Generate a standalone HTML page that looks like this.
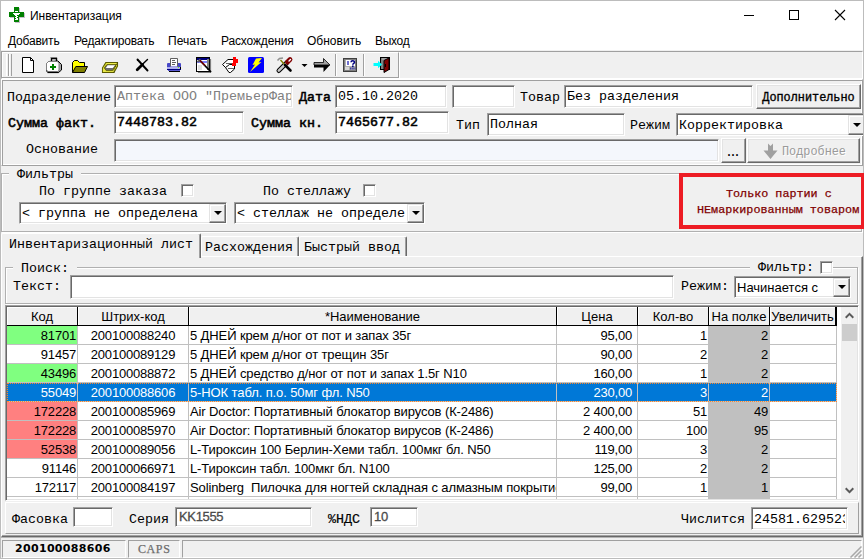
<!DOCTYPE html>
<html lang="ru">
<head>
<meta charset="utf-8">
<title>Инвентаризация</title>
<style>
*{box-sizing:border-box;margin:0;padding:0}
html,body{width:864px;height:559px;overflow:hidden;background:#f0f0f0}
body{position:relative;font-family:"Liberation Mono",monospace;font-size:13.333px;color:#000}
.abs{position:absolute}
#win{position:absolute;left:0;top:0;width:864px;height:559px;overflow:hidden}
#frame{position:absolute;left:0;top:0;width:864px;height:559px;border:1px solid #bcbcbc;z-index:50;pointer-events:none}
#title{position:absolute;left:1px;top:1px;width:862px;height:30px;background:#fff}
#title .t{position:absolute;left:29px;top:7px;font-family:"Liberation Sans",sans-serif;font-size:12px;line-height:16px;letter-spacing:-0.05px}
#menu{position:absolute;left:1px;top:31px;width:862px;height:19px;background:#fff;font-family:"Liberation Sans",sans-serif;font-size:12px;line-height:16px}
#menu span{position:absolute;top:2px;white-space:nowrap}
.hl{position:absolute;height:1px}
.vl{position:absolute;width:1px}
.lbl{position:absolute;white-space:nowrap;font-family:"Liberation Mono",monospace;font-size:13.333px;line-height:16px;height:16px;margin-top:1px}
.b{font-weight:normal;-webkit-text-stroke-width:0.55px}
.s{font-size:11.75px;-webkit-text-stroke-width:0.25px}
.inp{position:absolute;background:#fff;border:1px solid;border-color:#a0a0a0 #fff #fff #a0a0a0;box-shadow:inset 1px 1px 0 #696969, inset -1px -1px 0 #e3e3e3;white-space:nowrap;overflow:hidden;font-family:"Liberation Mono",monospace;font-size:13.333px;line-height:16px;padding:3px 0 0 2px}
.inp.t{font-family:"Liberation Sans",sans-serif;font-size:13px;color:#4a4a4a;padding-left:3px;letter-spacing:-0.35px;-webkit-text-stroke-width:0.3px}
.btn{position:absolute;background:#f0f0f0;border:1px solid;border-color:#fff #696969 #696969 #fff;box-shadow:inset -1px -1px 0 #a0a0a0, inset 1px 1px 0 #e3e3e3;white-space:nowrap;text-align:center;font-family:"Liberation Mono",monospace;font-size:11.85px;line-height:16px;font-weight:normal;-webkit-text-stroke-width:0.35px}
.dd{position:absolute;z-index:3;width:17px;background:#f0f0f0;border:1px solid;border-color:#e3e3e3 #696969 #696969 #e3e3e3;box-shadow:inset -1px -1px 0 #a0a0a0, inset 1px 1px 0 #fff}
.dd:after{content:"";display:block;margin:6px 0 0 4px;border:4px solid transparent;border-top:4px solid #000;border-bottom:0;width:0;height:0}
.cb{position:absolute;width:13px;height:13px;background:#fff;border:1px solid;border-color:#a0a0a0 #fff #fff #a0a0a0;box-shadow:inset 1px 1px 0 #696969, inset -1px -1px 0 #e3e3e3}
.grp{position:absolute;border:1px solid #b0b0b0;box-shadow:inset 1px 1px 0 #fff, 1px 1px 0 #fff}
.grp>.cap{position:absolute;top:-8px;background:#f0f0f0;padding:0 8px;white-space:nowrap;line-height:16px;height:16px;margin-top:1px;margin-left:-1px}
/* grid */
#grid{position:absolute;left:7px;top:307px;width:850px;height:192px;background:#fff;overflow:hidden;font-family:"Liberation Sans",sans-serif;font-size:13px}
#gridb{position:absolute;left:5px;top:305px;width:854px;height:196px;border:1px solid;border-color:#a0a0a0 #fff #fff #a0a0a0;box-shadow:inset 1px 1px 0 #696969, inset -1px -1px 0 #e3e3e3}
.hd{position:absolute;top:0;height:19px;background:#f0f0f0;border-right:1px solid #000;border-bottom:1px solid #000;box-shadow:inset 1px 1px 0 #fff;text-align:center;line-height:17px;white-space:nowrap;overflow:hidden;padding-top:1px}
.row{position:absolute;left:0;width:830px;height:19px}
.row .c{position:absolute;top:0;height:19px;border-right:1px solid #c0c0c0;border-bottom:1px solid #c0c0c0;line-height:18px;white-space:pre;overflow:hidden;padding:1px 1px 0 1px;letter-spacing:-0.11px}
.row .c.r,.row .c.m{letter-spacing:-0.2px}
.c.r{text-align:right}.c.m{text-align:center}.c.l{text-align:left}
.row .c.p{padding-right:5px}
.c.cg{background:#80ff80}.c.cr{background:#ff8080}.c.cs{background:#c0c0c0}
.row.sel{color:#fff}
.row.sel .c{background:#0078d7;border-right-color:#c0c0c0}
.sb{position:absolute;left:834px;top:0;width:17px;height:192px;background:#f0f0f0}
.thumb{position:absolute;left:1px;top:17px;width:15px;height:17px;background:#cdcdcd}
</style>
</head>
<body>
<div id="win">
<div id="frame"></div>
<div id="title"><span class="t">Инвентаризация</span>
<svg class="abs" style="left:7px;top:5px" width="18" height="18" viewBox="8 6 18 18" shape-rendering="crispEdges"><path d="M15 8h5v5h5v5h-5v5h-5v-5h-5v-5h5z" fill="#c8c0cc"/><path d="M14 7h5v5h5v5h-5v5h-5v-5H9v-5h5z" fill="#008000"/><rect x="15" y="11" width="3" height="1" fill="#fff"/><rect x="13" y="13" width="7" height="1" fill="#fff"/><rect x="14" y="14" width="5" height="1" fill="#fff"/><rect x="15" y="15" width="2" height="1" fill="#fff"/><rect x="16" y="16" width="2" height="1" fill="#fff"/><rect x="15" y="17" width="2" height="1" fill="#fff"/><rect x="16" y="18" width="2" height="1" fill="#fff"/><rect x="15" y="19" width="3" height="1" fill="#fff"/></svg>
<svg class="abs" style="left:742px;top:9px" width="12" height="12" viewBox="0 0 12 12"><path d="M1 5.5h10" stroke="#000" stroke-width="1"/></svg>
<svg class="abs" style="left:787px;top:8px" width="12" height="12" viewBox="0 0 12 12"><rect x="1.5" y="1.5" width="9" height="9" fill="none" stroke="#000" stroke-width="1"/></svg>
<svg class="abs" style="left:833px;top:8px" width="12" height="12" viewBox="0 0 12 12"><path d="M1 1l10 10M11 1L1 11" stroke="#000" stroke-width="1.1"/></svg>
</div>
<div id="menu">
<span style="left:7px;letter-spacing:-0.2px">Добавить</span><span style="left:73px;letter-spacing:-0.2px">Редактировать</span><span style="left:167px">Печать</span><span style="left:220px;letter-spacing:-0.15px">Расхождения</span><span style="left:306px">Обновить</span><span style="left:374px;letter-spacing:-0.3px">Выход</span>
</div>
<svg class="abs" style="left:0;top:51px" width="400" height="28" viewBox="0 51 400 28">
<!-- new doc -->
<path d="M22.500 57.500H30.500L33.500 60.500V72.500H22.500Z" fill="#fff" stroke="#000" stroke-width="1"/>
<path d="M30.500 57.500V60.500H33.500" fill="none" stroke="#000" stroke-width="1"/>
<!-- medkit -->
<path d="M51.500 61V58.500H56.500V61" fill="none" stroke="#000" stroke-width="1.400"/>
<path d="M50.500 57.500H57" fill="none" stroke="#808080" stroke-width="1"/>
<path d="M58 61L61.500 64.500V70L58.500 72.500H48L46.500 71V63.500L48.500 61.500Z" fill="#a8a8a8" stroke="#000" stroke-width="1"/>
<path d="M48.500 61.500H57.500L59 63.500V70.500L57.500 71.500H48L46.500 70V63.500Z" fill="#fff" stroke="#808080" stroke-width="1"/>
<path d="M47.500 72.500H58.500" stroke="#000" stroke-width="1.200"/>
<path d="M52 64h2v2h2v2h-2v2h-2v-2h-2v-2h2z" fill="#008000" shape-rendering="crispEdges"/>
<!-- folder -->
<path d="M72.500 72.500V62.500L74.500 60.500H77.500L79.500 62.500H84.500V67" fill="#ffff00" stroke="#000" stroke-width="1"/>
<path d="M73 72V63L75 61H77.300L79.300 63H84V67H73Z" fill="#ffff00"/>
<path d="M75.800 66.500H87.500L84.500 72.500H72.500Z" fill="#808000" stroke="#000" stroke-width="1"/>
<!-- tray -->
<path d="M105.800 62.500H117.500V66L114 72.500H102.500V67.800Z" fill="#d4d430" stroke="#5c5c00" stroke-width="1.100"/>
<path d="M106.500 63.600H116.600" stroke="#f0f050" stroke-width="1"/>
<path d="M107 64.600H116L112.600 70.600H106.200L104.300 68Z" fill="#6c6c6c" stroke="#5c5c00" stroke-width="0.800"/>
<path d="M107.700 65.200H115.200L112.700 68.100H105.800Z" fill="#fff"/>
<path d="M102.900 68.600L104 68.400L106 71.200H112.700L114 69.200V72.100H102.900Z" fill="#e8e84a"/>
<path d="M114 69.500V72.500M117.500 62.500L114 69" stroke="#3a3a00" stroke-width="1" stroke-dasharray="1 1"/>
<!-- X -->
<path d="M137.500 59.500L147.500 70.500" stroke="#000" stroke-width="1.900" stroke-linecap="round"/>
<path d="M147.500 59.500L142 64.800" stroke="#000" stroke-width="1.400" stroke-linecap="round"/>
<path d="M142.500 64.500L137.200 69.800" stroke="#000" stroke-width="2.800" stroke-linecap="round"/>
<!-- printer -->
<rect x="167" y="63" width="14" height="6" rx="1" fill="#4848c8"/>
<rect x="167" y="67" width="14" height="2" fill="#b0b0ee" shape-rendering="crispEdges"/>
<rect x="167" y="69" width="14" height="1" fill="#000080" shape-rendering="crispEdges"/>
<rect x="168" y="70" width="12" height="1" fill="#5858d0" shape-rendering="crispEdges"/>
<rect x="169" y="71" width="11" height="1" fill="#000" shape-rendering="crispEdges"/>
<rect x="180" y="67" width="1" height="2" fill="#000" shape-rendering="crispEdges"/>
<rect x="178" y="67" width="1" height="1" fill="#80ff00" shape-rendering="crispEdges"/>
<path d="M170.500 66.500V58.500H177.500V66.500" fill="#fff" stroke="#606060" stroke-width="1"/>
<path d="M172 60.500H175M172 62.500H176M172 64.500H175" stroke="#606060" stroke-width="1"/>
<!-- form with hammer -->
<rect x="196.500" y="57.500" width="13" height="14" fill="#fff" stroke="#000" stroke-width="1"/>
<path d="M210.500 59V72.500H198" fill="none" stroke="#808080" stroke-width="1.200"/>
<rect x="197" y="58" width="12" height="2" fill="#000080" shape-rendering="crispEdges"/>
<rect x="197" y="60" width="12" height="1" fill="#fff" shape-rendering="crispEdges"/>
<rect x="197" y="61" width="12" height="2" fill="#8080ff" shape-rendering="crispEdges"/>
<rect x="198" y="65" width="4" height="5" fill="#e0e0e0" shape-rendering="crispEdges"/>
<path d="M208 59V70" stroke="#808080" stroke-width="2"/>
<path d="M197.500 62L200.500 59.500" stroke="#606060" stroke-width="2"/>
<path d="M200 60.500L211 72" stroke="#000" stroke-width="1.800"/>
<path d="M200 60.500L205 65.500" stroke="#800000" stroke-width="1.200"/>
<!-- pills + red cross -->
<path d="M222.500 64.500L228 59.500H233L234.500 61.500V66.500L229 69L225.500 67.500Z" fill="#fff" stroke="#000" stroke-width="1"/>
<path d="M225.500 67.500L229.500 64.500H234.500V69L230.500 72.500H229Z" fill="#fff" stroke="#000" stroke-width="1"/>
<path d="M226 63.500H233M228 68.500H234" stroke="#606060" stroke-width="1"/>
<path d="M233 57h3v2h2v4h-2v3h-4v-3h1z" fill="#ff0000" shape-rendering="crispEdges"/>
<!-- lightning -->
<rect x="248" y="57" width="16" height="16" rx="1.500" fill="#0000ff"/>
<path d="M256 58.500L262 58L258.500 62.500L261.500 62L250 72L255 64.500L252.500 65Z" fill="#ffff00"/>
<!-- tools -->
<path d="M278.800 70.700L287 62.500" stroke="#000" stroke-width="4.600" stroke-linecap="round"/>
<path d="M278.800 70.700L287 62.500" stroke="#c8c8c8" stroke-width="2.600" stroke-linecap="round"/>
<path d="M287.500 62L290 59.500" stroke="#800000" stroke-width="4.800" stroke-linecap="round"/>
<path d="M289 61L290.500 59.500" stroke="#fff" stroke-width="1.400" stroke-linecap="round"/>
<path d="M277.500 60.500L279.500 58.500L283 58" stroke="#909090" stroke-width="1.600" fill="none"/>
<path d="M280.500 60L285 65" stroke="#808000" stroke-width="1.400"/>
<path d="M285 65L290.500 70.500" stroke="#000" stroke-width="2.600" stroke-linecap="round"/>
<!-- dropdown arrow -->
<path d="M301.500 64H307.500L304.500 67Z" fill="#000"/>
<!-- arrow right -->
<path d="M314 62.500H323.500V58.500L330 65H314Z" fill="#a0a0a0" stroke="#000" stroke-width="0.800"/>
<path d="M314 65H330L323.500 72V67.500H314Z" fill="#000"/>
<!-- ? window -->
<rect x="343.500" y="58.500" width="13" height="13" fill="#808080" stroke="#404040" stroke-width="1"/>
<rect x="345" y="60" width="10" height="10" fill="#b0b0b0" shape-rendering="crispEdges"/>
<rect x="346" y="60" width="9" height="6" fill="#fff" shape-rendering="crispEdges"/>
<rect x="345" y="67" width="4" height="3" fill="#d8d8d8" shape-rendering="crispEdges"/>
<rect x="347" y="61" width="2" height="4" fill="#7070d0" shape-rendering="crispEdges"/>
<path d="M351 62.200C351 60.300 354.500 60.300 354.500 62.200C354.500 63.500 352.800 63.300 352.800 64.800" fill="none" stroke="#000080" stroke-width="1.500"/>
<rect x="352" y="65.500" width="1.600" height="1.500" fill="#000080"/>
<path d="M350 68.500H355.500" stroke="#4040a0" stroke-width="2" stroke-dasharray="1.500 0.700"/>
<!-- exit door -->
<rect x="380.500" y="57.500" width="9" height="12" fill="#808080" stroke="#000" stroke-width="1"/>
<path d="M382 59H388" stroke="#c0c0c0" stroke-width="1"/>
<path d="M384 60.500L389 58V69.500L384 72.500Z" fill="#800000" stroke="#000" stroke-width="1"/>
<rect x="385" y="64" width="1" height="3" fill="#000" shape-rendering="crispEdges"/>
<path d="M373.500 63H378V60.800L382 64.500L378 68.200V66H373.500Z" fill="#00ffff"/>
</svg>
<!-- toolbar band -->
<div class="abs" style="left:1px;top:51px;width:862px;height:28px;border:1px solid;border-color:#a0a0a0 #fff #fff #a0a0a0"></div>
<div class="abs" style="left:2px;top:52px;width:397px;height:26px;border:1px solid;border-color:#fff #a0a0a0 #a0a0a0 #fff"></div>
<div class="vl" style="left:399px;top:52px;height:26px;background:#fff"></div>
<div class="hl" style="left:1px;top:77px;width:2px;background:#a0a0a0"></div>
<div class="abs" style="left:6px;top:54px;width:3px;height:22px;border-left:1px solid #fff;border-right:1px solid #a0a0a0"></div>
<div class="abs" style="left:9px;top:54px;width:3px;height:22px;border-left:1px solid #fff;border-right:1px solid #a0a0a0"></div>
<div class="vl" style="left:335px;top:54px;height:22px;background:#a0a0a0;box-shadow:1px 0 0 #fff"></div>
<div class="vl" style="left:363px;top:54px;height:22px;background:#a0a0a0;box-shadow:1px 0 0 #fff"></div>
<!-- header panel -->
<div class="abs" style="left:1px;top:79px;width:862px;height:87px;border:1px solid;border-color:#fff #a0a0a0 #a0a0a0 #fff;box-shadow:inset 1px 1px 0 #a0a0a0,inset -1px -1px 0 #fff"></div>
<span class="lbl" style="left:7px;top:89px">Подразделение</span>
<div class="inp" style="left:114px;top:85px;width:179px;height:23px;color:#808080"><span style="display:block;overflow:hidden;width:174px">Аптека ООО "ПремьерФарм"</span></div>
<span class="lbl b" style="left:299px;top:89px">Дата</span>
<div class="inp" style="left:335px;top:85px;width:112px;height:23px">05.10.2020</div>
<div class="inp" style="left:452px;top:85px;width:63px;height:23px"></div>
<span class="lbl" style="left:520px;top:89px">Товар</span>
<div class="inp" style="left:564px;top:85px;width:189px;height:23px">Без разделения</div>
<div class="btn" style="left:756px;top:84px;width:105px;height:25px;padding-top:5px">Дополнительно</div>
<span class="lbl b" style="left:8px;top:115px">Сумма факт.</span>
<div class="inp b" style="left:114px;top:111px;width:130px;height:23px">7448783.82</div>
<span class="lbl b" style="left:251px;top:115px">Сумма кн.</span>
<div class="inp b" style="left:335px;top:111px;width:114px;height:23px">7465677.82</div>
<span class="lbl" style="left:456px;top:117px">Тип</span>
<div class="inp" style="left:487px;top:113px;width:138px;height:23px">Полная</div>
<span class="lbl" style="left:630px;top:117px">Режим</span>
<div class="inp" style="left:676px;top:113px;width:190px;height:23px;padding-top:4px">Корректировка</div>
<div class="dd" style="left:848px;top:115px;height:20px;padding-top:1px"></div>
<span class="lbl" style="left:26px;top:141px">Основание</span>
<div class="inp" style="left:114px;top:139px;width:605px;height:23px;background:#f4f7fc"></div>
<div class="btn" style="left:721px;top:138px;width:25px;height:25px;-webkit-text-stroke-width:0;font-size:13.333px;letter-spacing:-4px;text-align:left;padding:6px 0 0 3px">...</div>
<div class="btn" style="left:747px;top:138px;width:113px;height:25px;padding:5px 0 0 21px;-webkit-text-stroke-width:0;color:#9a9a9a;text-shadow:1px 1px 0 #fff">Подробнее
<svg class="abs" style="left:15px;top:4px" width="16" height="17" viewBox="0 0 16 17"><path d="M5 0.500L7.500 3 10 0.500V7.500H14.500L7.500 16 0.500 7.500H5z" fill="#a0a0a0"/></svg></div>
<!-- filters group -->
<div class="grp" style="left:1px;top:173px;width:861px;height:59px"><span class="cap" style="left:8px">Фильтры</span></div>
<span class="lbl" style="left:39px;top:183px">По группе заказа</span>
<div class="cb" style="left:181px;top:184px"></div>
<div class="inp" style="left:19px;top:202px;width:208px;height:22px">&lt; группа не определена</div>
<div class="dd" style="left:209px;top:204px;height:19px"></div>
<span class="lbl" style="left:263px;top:183px">По стеллажу</span>
<div class="cb" style="left:363px;top:184px"></div>
<div class="inp" style="left:234px;top:202px;width:191px;height:22px"><span style="display:block;overflow:hidden;width:168px">&lt; стеллаж не определен &gt;</span></div>
<div class="dd" style="left:407px;top:204px;height:19px"></div>
<div class="abs" style="left:679px;top:173px;width:186px;height:56px;border:4px solid #ed1c24;background:#f0f0f0;z-index:60"></div>
<span class="lbl b s" style="left:726px;top:185px;color:#800000;z-index:61">Только партии с</span>
<span class="lbl b s" style="left:697px;top:201px;color:#800000;z-index:61">НЕмаркированным товаром</span>
<!-- tabs -->
<div class="abs" style="left:1px;top:256px;width:862px;height:281px;border:1px solid;border-color:#fff #696969 #696969 #fff;box-shadow:inset -1px -1px 0 #a0a0a0"></div>
<div class="abs" style="left:1px;top:233px;width:200px;height:25px;background:#f0f0f0;border:1px solid;border-color:#fff #696969 transparent #fff;border-bottom:0;box-shadow:inset -1px 0 0 #a0a0a0;border-radius:2px 2px 0 0"></div>
<span class="lbl" style="left:9px;top:236px">Инвентаризационный лист</span>
<div class="abs" style="left:201px;top:236px;width:98px;height:20px;border:1px solid;border-color:#fff #696969 transparent #fff;border-bottom:0;box-shadow:inset -1px 0 0 #a0a0a0;border-radius:2px 2px 0 0"></div>
<span class="lbl" style="left:205px;top:239px">Расхождения</span>
<div class="abs" style="left:299px;top:236px;width:108px;height:20px;border:1px solid;border-color:#fff #696969 transparent #fff;border-bottom:0;box-shadow:inset -1px 0 0 #a0a0a0;border-radius:2px 2px 0 0"></div>
<span class="lbl" style="left:304px;top:239px">Быстрый ввод</span>
<!-- search group -->
<div class="grp" style="left:5px;top:267px;width:853px;height:37px"><span class="cap" style="left:8px">Поиск:</span></div>
<div class="abs" style="left:750px;top:260px;width:83px;height:14px;background:#f0f0f0"></div>
<span class="lbl" style="left:758px;top:259px">Фильтр:</span>
<div class="cb" style="left:820px;top:261px"></div>
<span class="lbl" style="left:13px;top:278px">Текст:</span>
<div class="inp" style="left:70px;top:275px;width:604px;height:24px"></div>
<span class="lbl" style="left:681px;top:278px">Режим:</span>
<div class="inp" style="left:734px;top:276px;width:117px;height:22px;font-family:'Liberation Sans',sans-serif;font-size:13px;padding-top:3px">Начинается с</div>
<div class="dd" style="left:833px;top:278px;height:19px"></div>
<div id="gridb"></div>
<div id="grid">
<div class="hd" style="left:0px;width:71px">Код</div>
<div class="hd" style="left:71px;width:111px">Штрих-код</div>
<div class="hd" style="left:182px;width:368px">*Наименование</div>
<div class="hd" style="left:550px;width:81px">Цена</div>
<div class="hd" style="left:631px;width:71px">Кол-во</div>
<div class="hd" style="left:702px;width:61px">На полке</div>
<div class="hd" style="left:763px;width:67px;border-right-width:2px">Увеличить</div>
<div class="row g" style="top:19px"><div class="c r cg" style="left:0px;width:71px">81701</div><div class="c m" style="left:71px;width:111px">200100088240</div><div class="c l" style="left:182px;width:368px">5 ДНЕЙ крем д/ног от пот и запах 35г</div><div class="c r p" style="left:550px;width:81px">95,00</div><div class="c r" style="left:631px;width:71px">1</div><div class="c r cs" style="left:702px;width:61px">2</div><div class="c " style="left:763px;width:67px"></div></div>
<div class="row " style="top:38px"><div class="c r" style="left:0px;width:71px">91457</div><div class="c m" style="left:71px;width:111px">200100089129</div><div class="c l" style="left:182px;width:368px">5 ДНЕЙ крем д/ног от трещин 35г</div><div class="c r p" style="left:550px;width:81px">90,00</div><div class="c r" style="left:631px;width:71px">2</div><div class="c r cs" style="left:702px;width:61px">2</div><div class="c " style="left:763px;width:67px"></div></div>
<div class="row g" style="top:57px"><div class="c r cg" style="left:0px;width:71px">43496</div><div class="c m" style="left:71px;width:111px">200100088872</div><div class="c l" style="left:182px;width:368px">5 ДНЕЙ средство д/ног от пот и запах 1.5г N10</div><div class="c r p" style="left:550px;width:81px">160,00</div><div class="c r" style="left:631px;width:71px">1</div><div class="c r cs" style="left:702px;width:61px">2</div><div class="c " style="left:763px;width:67px"></div></div>
<div class="row sel" style="top:76px"><div class="c r" style="left:0px;width:71px">55049</div><div class="c m" style="left:71px;width:111px">200100088606</div><div class="c l" style="left:182px;width:368px">5-НОК табл. п.о. 50мг фл. N50</div><div class="c r p" style="left:550px;width:81px">230,00</div><div class="c r" style="left:631px;width:71px">3</div><div class="c r cs" style="left:702px;width:61px">2</div><div class="c " style="left:763px;width:67px"></div></div>
<div class="row r" style="top:95px"><div class="c r cr" style="left:0px;width:71px">172228</div><div class="c m" style="left:71px;width:111px">200100085969</div><div class="c l" style="left:182px;width:368px">Air Doctor: Портативный блокатор вирусов (К-2486)</div><div class="c r p" style="left:550px;width:81px">2 400,00</div><div class="c r" style="left:631px;width:71px">51</div><div class="c r cs" style="left:702px;width:61px">49</div><div class="c " style="left:763px;width:67px"></div></div>
<div class="row r" style="top:114px"><div class="c r cr" style="left:0px;width:71px">172228</div><div class="c m" style="left:71px;width:111px">200100085970</div><div class="c l" style="left:182px;width:368px">Air Doctor: Портативный блокатор вирусов (К-2486)</div><div class="c r p" style="left:550px;width:81px">2 400,00</div><div class="c r" style="left:631px;width:71px">100</div><div class="c r cs" style="left:702px;width:61px">95</div><div class="c " style="left:763px;width:67px"></div></div>
<div class="row r" style="top:133px"><div class="c r cr" style="left:0px;width:71px">52538</div><div class="c m" style="left:71px;width:111px">200100089056</div><div class="c l" style="left:182px;width:368px">L-Тироксин 100 Берлин-Хеми табл. 100мкг бл. N50</div><div class="c r p" style="left:550px;width:81px">119,00</div><div class="c r" style="left:631px;width:71px">3</div><div class="c r cs" style="left:702px;width:61px">2</div><div class="c " style="left:763px;width:67px"></div></div>
<div class="row " style="top:152px"><div class="c r" style="left:0px;width:71px">91146</div><div class="c m" style="left:71px;width:111px">200100066971</div><div class="c l" style="left:182px;width:368px">L-Тироксин табл. 100мкг бл. N100</div><div class="c r p" style="left:550px;width:81px">125,00</div><div class="c r" style="left:631px;width:71px">2</div><div class="c r cs" style="left:702px;width:61px">2</div><div class="c " style="left:763px;width:67px"></div></div>
<div class="row " style="top:171px"><div class="c r" style="left:0px;width:71px">172117</div><div class="c m" style="left:71px;width:111px">200100084197</div><div class="c l" style="left:182px;width:368px">Solinberg  Пилочка для ногтей складная с алмазным покрытием</div><div class="c r p" style="left:550px;width:81px">99,00</div><div class="c r" style="left:631px;width:71px">1</div><div class="c r cs" style="left:702px;width:61px">1</div><div class="c " style="left:763px;width:67px"></div></div>
<div class="row " style="top:190px"><div class="c r" style="left:0px;width:71px"></div><div class="c m" style="left:71px;width:111px"></div><div class="c l" style="left:182px;width:368px"></div><div class="c r p" style="left:550px;width:81px"></div><div class="c r" style="left:631px;width:71px"></div><div class="c r cs" style="left:702px;width:61px"></div><div class="c " style="left:763px;width:67px"></div></div>
<div class="abs" style="left:0;top:76px;width:830px;height:19px;border:1px dotted #ff8728;z-index:2"></div>
<div class="sb"><svg class="abs" style="left:4px;top:5px" width="9" height="7" viewBox="0 0 9 7"><path d="M0.7 5.700L4.500 1.900L8.300 5.700" fill="none" stroke="#5a5a5a" stroke-width="2"/></svg><div class="thumb"></div><svg class="abs" style="left:4px;top:180px" width="9" height="7" viewBox="0 0 9 7"><path d="M0.7 1.300L4.500 5.100L8.300 1.300" fill="none" stroke="#5a5a5a" stroke-width="2"/></svg></div>
</div>
<div class="abs" style="left:5px;top:502px;width:854px;height:32px;border:1px solid;border-color:#fff #a0a0a0 #a0a0a0 #fff"></div>
<span class="lbl" style="left:12px;top:511px">Фасовка</span>
<div class="inp" style="left:73px;top:507px;width:40px;height:20px"></div>
<span class="lbl" style="left:129px;top:511px">Серия</span>
<div class="inp t" style="left:175px;top:507px;width:137px;height:20px;padding-top:1px">KK1555</div>
<span class="lbl b" style="left:328px;top:511px;-webkit-text-stroke-width:0.2px">%НДС</span>
<div class="inp t" style="left:370px;top:507px;width:48px;height:20px;padding-top:1px">10</div>
<span class="lbl" style="left:681px;top:511px">Числится</span>
<div class="inp" style="left:751px;top:507px;width:97px;height:23px;padding-top:4px"><span style="display:block;overflow:hidden;width:91px">24581.629523</span></div>
<!-- status bar -->
<div class="hl" style="left:1px;top:537px;width:862px;background:#b4b4b4"></div>
<div class="abs" style="left:2px;top:540px;width:124px;height:18px;border:1px solid;border-color:#a0a0a0 #fff #fff #a0a0a0"></div>
<span class="abs" style="left:15px;top:542px;font-family:'DejaVu Sans',sans-serif;font-weight:bold;font-size:11px;letter-spacing:0.32px;line-height:14px">200100088606</span>
<div class="abs" style="left:128px;top:540px;width:52px;height:18px;border:1px solid;border-color:#a0a0a0 #fff #fff #a0a0a0"></div>
<span class="abs" style="left:138px;top:542px;font-family:'Liberation Serif',serif;font-size:12px;letter-spacing:0.6px;line-height:14px;color:#6d6d6d;-webkit-text-stroke-width:0.25px">CAPS</span>
<div class="abs" style="left:182px;top:540px;width:680px;height:18px;border:1px solid;border-color:#a0a0a0 #fff #fff #a0a0a0"></div>
<svg class="abs" style="left:849px;top:545px" width="13" height="13" viewBox="0 0 13 13"><path d="M12.500 1.500L1.500 12.500M12.500 5.500L5.500 12.500M12.500 9.500L9.500 12.500" stroke="#a8a8a8" stroke-width="1.500"/></svg>
</div>
</body>
</html>
